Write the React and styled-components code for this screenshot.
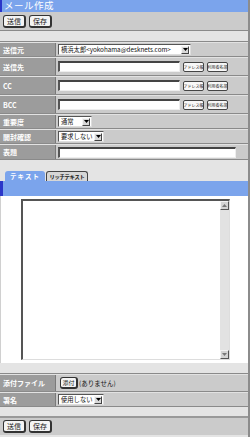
import React from 'react';
import styled, { createGlobalStyle } from 'styled-components';

const GlobalStyles = createGlobalStyle`
	body {
		margin: 0;
		background: #e4e4e4;
		font-family: "Noto Sans CJK JP", "DejaVu Sans", sans-serif;
	}
`;

const BLUE = '#7ba4ec';
const DARK_BLUE = '#2b36c8';
const PANEL = '#cbcbcb';
const LABEL = '#9c9c9c';

const recipients = ['送信先', 'CC', 'BCC'];

const Toolbar = ({ top }) => (
	<ToolbarStyles top={top}>
		<ToolButton>送信</ToolButton>
		<ToolButton>保存</ToolButton>
	</ToolbarStyles>
);

const FakeSelect = ({ width, children }) => (
	<SelectBox width={width}>
		<SelectText>{children}</SelectText>
		<SelectArrow>
			<svg width="5" height="3" viewBox="0 0 5 3">
				<path d="M0 0h5L2.5 3z" fill="#000" />
			</svg>
		</SelectArrow>
	</SelectBox>
);

const Arrow = ({ up }) => (
	<ScrollButton>
		<svg width="5" height="3" viewBox="0 0 5 3">
			<path d={up ? 'M0 3h5L2.5 0z' : 'M0 0h5L2.5 3z'} fill="#777" />
		</svg>
	</ScrollButton>
);

export default function App() {
	return (
		<>
			<GlobalStyles />
			<Page>
				<TitleBar>メール作成</TitleBar>
				<Toolbar />
				<Spacer h={10} />
				<FormTable>
					<Row h={15}>
						<Label>送信元</Label>
						<Value>
							<FakeSelect width={133}>横浜太郎&lt;yokohama@desknets.com&gt;</FakeSelect>
						</Value>
					</Row>
					{recipients.map(name => (
						<Row h={19} key={name}>
							<Label>{name}</Label>
							<Value>
								<TextInput w={122} />
								<SmallButton>アドレス帳</SmallButton>
								<SmallButton>利用者名簿</SmallButton>
							</Value>
						</Row>
					))}
					<Row h={15}>
						<Label>重要度</Label>
						<Value>
							<FakeSelect width={34}>通常</FakeSelect>
						</Value>
					</Row>
					<Row h={15}>
						<Label>開封確認</Label>
						<Value>
							<FakeSelect width={46}>要求しない</FakeSelect>
						</Value>
					</Row>
					<Row h={16}>
						<Label>表題</Label>
						<Value>
							<TextInput w={178} />
						</Value>
					</Row>
				</FormTable>
				<Spacer h={11} />
				<Tabs>
					<Tab active>テキスト</Tab>
					<Tab>リッチテキスト</Tab>
				</Tabs>
				<BlueBar />
				<Editor>
					<TextFrame>
						<TextArea />
						<ScrollBar>
							<Arrow up />
							<Arrow />
						</ScrollBar>
					</TextFrame>
				</Editor>
				<Spacer h={10} />
				<FormTable>
					<Row h={18}>
						<Label>添付ファイル</Label>
						<Value>
							<AttachButton>添付</AttachButton>
							<Note>(ありません)</Note>
						</Value>
					</Row>
					<Row h={15}>
						<Label>署名</Label>
						<Value>
							<FakeSelect width={46}>使用しない</FakeSelect>
						</Value>
					</Row>
				</FormTable>
				<Spacer h={9} />
				<Toolbar top />
			</Page>
		</>
	);
}

const Page = styled.div`
	width: 250px;
	height: 437px;
	box-sizing: border-box;
	border-right: 2px solid #8c8c8c;
	background: #e4e4e4;
	overflow: hidden;
`;

const TitleBar = styled.div`
	height: 12px;
	display: flex;
	align-items: center;
	background: ${BLUE};
	border-left: 2px solid ${DARK_BLUE};
	color: #fff;
	font-size: 9.5px;
	line-height: 1;
	padding-left: 2px;
	letter-spacing: 0.5px;
	white-space: nowrap;
`;

const ToolbarStyles = styled.div`
	height: 19px;
	box-sizing: border-box;
	display: flex;
	align-items: center;
	gap: 3px;
	padding-left: 3px;
	background: ${PANEL};
	border-bottom: ${p => (p.top ? 'none' : '1px solid #8a8a8a')};
	border-top: ${p => (p.top ? '2px solid #999' : 'none')};
`;

const ToolButton = styled.div`
	width: 23px;
	height: 13px;
	box-sizing: border-box;
	display: flex;
	align-items: center;
	justify-content: center;
	background: #f4f4f4;
	border: 1px solid #333;
	border-right-width: 2px;
	border-bottom-width: 2px;
	border-radius: 3px;
	font-size: 7px;
	color: #222;
`;

const Spacer = styled.div`
	height: ${p => p.h}px;
`;

const FormTable = styled.div`
	border-top: 1px solid #8a8a8a;
`;

const Row = styled.div`
	display: grid;
	grid-template-columns: 56px 1fr;
	height: ${p => p.h}px;
	box-sizing: border-box;
	border-bottom: 1px solid #8a8a8a;
	border-top: 1px solid #e2e2e2;
`;

const Label = styled.div`
	background: ${LABEL};
	border-right: 1px solid #7a7a7a;
	color: #fff;
	font-size: 7px;
	font-weight: bold;
	display: flex;
	align-items: center;
	padding-left: 3px;
	white-space: nowrap;
`;

const Value = styled.div`
	background: ${PANEL};
	display: flex;
	align-items: center;
	gap: 3px;
	padding-left: 2px;
`;

const SelectBox = styled.div`
	width: ${p => p.width}px;
	height: 11px;
	box-sizing: border-box;
	display: flex;
	align-items: center;
	background: #fff;
	border: 1px solid #555;
	border-right-color: #ddd;
	border-bottom-color: #ddd;
`;

const SelectText = styled.span`
	flex: 1;
	min-width: 0;
	font-size: 6.3px;
	line-height: 9px;
	padding-left: 2px;
	white-space: nowrap;
	overflow: hidden;
	color: #111;
`;

const SelectArrow = styled.span`
	flex: none;
	width: 8px;
	height: 8px;
	margin-right: 1px;
	box-sizing: border-box;
	display: flex;
	align-items: center;
	justify-content: center;
	background: #d8d8d8;
	border: 1px solid #f4f4f4;
	border-right-color: #444;
	border-bottom-color: #444;
`;

const TextInput = styled.input`
	width: ${p => p.w}px;
	height: 11px;
	box-sizing: border-box;
	margin: 0;
	padding: 0;
	background: #fff;
	border: 2px solid #555;
	border-right: 1px solid #eee;
	border-bottom: 1px solid #eee;
	border-top-color: #444;
	outline: none;
`;

const SmallButton = styled.div`
	width: 21px;
	height: 10px;
	box-sizing: border-box;
	display: flex;
	align-items: center;
	justify-content: center;
	background: #f8f8f8;
	border: 1px solid #444;
	border-radius: 2px;
	font-size: 4px;
	white-space: nowrap;
	overflow: hidden;
	color: #222;
`;

const AttachButton = styled(ToolButton)`
	width: 18px;
	height: 12px;
	margin-left: 2px;
	font-size: 6px;
`;

const Note = styled.span`
	font-size: 6.5px;
	color: #111;
	margin-left: -2px;
	white-space: nowrap;
`;

const Tabs = styled.div`
	display: flex;
	align-items: flex-end;
	gap: 1px;
	padding-left: 5px;
	height: 10px;
`;

const Tab = styled.div`
	height: 10px;
	box-sizing: border-box;
	display: flex;
	align-items: center;
	justify-content: center;
	font-size: ${p => (p.active ? '6.5px' : '5.3px')};
	font-weight: bold;
	white-space: nowrap;
	overflow: hidden;
	border-radius: 3px 3px 0 0;
	background: ${p => (p.active ? BLUE : '#d6d6d6')};
	color: ${p => (p.active ? '#fff' : '#111')};
	border: ${p => (p.active ? 'none' : '1px solid #444')};
	border-bottom: none;
	width: ${p => (p.active ? '40px' : '42px')};
	letter-spacing: ${p => (p.active ? '1px' : '-0.3px')};
`;

const BlueBar = styled.div`
	height: 15px;
	background: ${BLUE};
	border-left: 3px solid ${DARK_BLUE};
`;

const Editor = styled.div`
	height: 167px;
	box-sizing: border-box;
	background: #fff;
	border-left: 1px solid #d0d0d0;
	padding: 3px 0 0 20px;
`;

const TextFrame = styled.div`
	width: 209px;
	height: 161px;
	box-sizing: border-box;
	display: flex;
	border: 2px solid #555;
	border-right: 1px solid #ddd;
	border-bottom: 1px solid #ddd;
	background: #fff;
`;

const TextArea = styled.textarea`
	flex: 1;
	border: none;
	resize: none;
	margin: 0;
	padding: 0;
	outline: none;
`;

const ScrollBar = styled.div`
	width: 9px;
	display: flex;
	flex-direction: column;
	justify-content: space-between;
	background: #e2e2e2;
`;

const ScrollButton = styled.div`
	height: 9px;
	box-sizing: border-box;
	display: flex;
	align-items: center;
	justify-content: center;
	background: #d4d4d4;
	border: 1px solid #f2f2f2;
	border-right-color: #555;
	border-bottom-color: #555;
`;
